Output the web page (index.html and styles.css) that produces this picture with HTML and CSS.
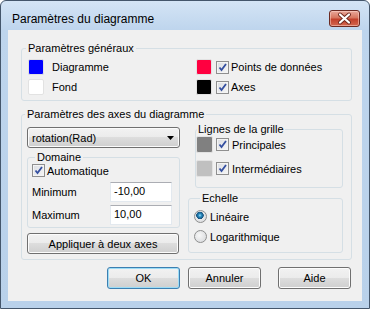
FILE: index.html
```html
<!DOCTYPE html>
<html lang="fr">
<head>
    <meta charset="UTF-8">
    <title>Paramètres du diagramme</title>
    <link rel="stylesheet" href="styles.css">
</head>
<body>
    <div class="window">
        <div class="titlebar">
            <span class="title">Paramètres du diagramme</span>
            <span class="close">
                <svg width="31" height="17" viewBox="0 0 31 17">
                    <path d="M11 4.5l9 8M20 4.5l-9 8" stroke="#6e2a20" stroke-width="4" stroke-linecap="round"/>
                    <path d="M11 4.5l9 8M20 4.5l-9 8" stroke="#fff" stroke-width="2.2" stroke-linecap="round"/>
                </svg>
            </span>
        </div>

        <div class="client">
            <fieldset class="group general">
                <legend>Paramètres généraux</legend>
                <div class="general-grid">
                    <div class="item">
                        <span class="swatch blue"></span>
                        <span class="name">Diagramme</span>
                    </div>
                    <div class="item">
                        <span class="swatch red"></span>
                        <span class="chk"></span>
                        <span class="check-label">Points de données</span>
                    </div>
                    <div class="item">
                        <span class="swatch white"></span>
                        <span class="name">Fond</span>
                    </div>
                    <div class="item">
                        <span class="swatch black"></span>
                        <span class="chk"></span>
                        <span class="check-label">Axes</span>
                    </div>
                </div>
            </fieldset>

            <fieldset class="group axes">
                <legend>Paramètres des axes du diagramme</legend>
                <div class="axes-body">
                    <div class="col-left">
                        <div class="combo">
                            <span>rotation(Rad)</span>
                            <svg width="7" height="4" viewBox="0 0 7 4"><path d="M0 0h7L3.5 4z" fill="#000"/></svg>
                        </div>
                        <fieldset class="group domaine">
                            <legend>Domaine</legend>
                            <div class="auto-row">
                                <span class="chk"></span>
                                <span>Automatique</span>
                            </div>
                            <div class="range">
                                <span>Minimum</span>
                                <span class="field">-10,00</span>
                                <span>Maximum</span>
                                <span class="field">10,00</span>
                            </div>
                        </fieldset>
                        <button class="btn apply">Appliquer à deux axes</button>
                    </div>
                    <div class="col-right">
                        <fieldset class="group grille">
                            <legend>Lignes de la grille</legend>
                            <div class="grid-row">
                                <span class="swatch gray"></span>
                                <span class="chk"></span>
                                <span>Principales</span>
                            </div>
                            <div class="grid-row">
                                <span class="swatch light"></span>
                                <span class="chk"></span>
                                <span>Intermédiaires</span>
                            </div>
                        </fieldset>
                        <fieldset class="group echelle">
                            <legend>Echelle</legend>
                            <div class="radio-row">
                                <span class="radio on"></span>
                                <span>Linéaire</span>
                            </div>
                            <div class="radio-row">
                                <span class="radio"></span>
                                <span>Logarithmique</span>
                            </div>
                        </fieldset>
                    </div>
                </div>
            </fieldset>

            <div class="actions">
                <button class="btn default">OK</button>
                <button class="btn">Annuler</button>
                <button class="btn help">Aide</button>
            </div>
        </div>
    </div>
</body>
</html>
```

FILE: styles.css
```css
body {
    margin: 0;
    background: #fff;
    font-family: "Liberation Sans", Arial, sans-serif;
    font-size: 11px;
    color: #000;
}
.window {
    width: 370px;
    height: 309px;
    box-sizing: border-box;
    border: 1px solid #44566b;
    border-radius: 6px 6px 0 0;
    background: linear-gradient(#d4e4f5, #bed5ed 29px, #b9d1ea);
    padding: 0 7px 7px;
    display: flex;
    flex-direction: column;
}
.titlebar {
    height: 29px;
    box-sizing: border-box;
    display: flex;
    justify-content: space-between;
    align-items: flex-start;
}
.title {
    font-size: 12px;
    line-height: 15px;
    margin: 11px 0 0 4px;
}
.close {
    width: 31px;
    height: 17px;
    margin: 9px 2px 0 0;
    box-sizing: border-box;
    border: 1px solid #6b2a22;
    border-radius: 3px;
    background: linear-gradient(#e9a99b, #d7765f 45%, #c2412c 55%, #d4674f);
    box-shadow: inset 0 0 0 1px rgba(255, 220, 210, 0.5);
    overflow: hidden;
}
.close svg {
    display: block;
    margin: -1px;
}
.client {
    flex: 1;
    background: #f0f0f0;
    display: flex;
    flex-direction: column;
}
.group {
    border: 1px solid #d5dfe5;
    border-radius: 3px;
    margin: 0;
    padding: 0;
    min-width: 0;
}
.group legend {
    padding: 0 2px;
    margin-left: 4px;
    line-height: 13px;
}
.general {
    margin: 12px 10px 0 13px;
    padding: 4px 6px 5px;
}
.general legend {
    margin-left: -2px;
}
.general-grid {
    display: grid;
    grid-template-columns: 168px 1fr;
    row-gap: 4px;
}
.item {
    display: flex;
    align-items: center;
    height: 16px;
}
.swatch {
    width: 16px;
    height: 16px;
    box-sizing: border-box;
    border: 1px solid #e2e2e2;
    border-radius: 2px;
    flex: none;
}
.blue { background: #0000ff; }
.red { background: #ff0040; }
.white { background: #fff; }
.black { background: #000; }
.gray { background: #808080; width: 17px; height: 17px; }
.light { background: #c0c0c0; width: 17px; height: 17px; }
.name {
    margin-left: 8px;
}
.chk {
    width: 13px;
    height: 13px;
    flex: none;
    box-sizing: border-box;
    border: 1px solid #8f8f8f;
    background:
        url("data:image/svg+xml,%3Csvg xmlns='http://www.w3.org/2000/svg' width='11' height='11'%3E%3Cpath d='M2.5 5.5l2 2.5L9 2' fill='none' stroke='%23344fa0' stroke-width='1.8'/%3E%3C/svg%3E") center / 11px 11px no-repeat,
        linear-gradient(135deg, #dcdee3, #f6f6f6);
    box-shadow: inset 0 0 0 1px #f4f4f4;
}
.item .chk {
    margin-left: 4px;
}
.check-label {
    margin-left: 2px;
}
.axes {
    margin: 7px 10px 0 13px;
    padding: 6px 8px 5px 5px;
}
.axes legend {
    margin-left: -2px;
}
.axes-body {
    display: flex;
    gap: 8px;
}
.col-left {
    width: 153px;
    display: flex;
    flex-direction: column;
}
.col-right {
    width: 155px;
    display: flex;
    flex-direction: column;
}
.combo {
    height: 21px;
    box-sizing: border-box;
    border: 1px solid #707070;
    border-radius: 3px;
    background: linear-gradient(#f2f2f2, #ebebeb 50%, #dddddd 50%, #cfcfcf);
    box-shadow: inset 0 0 0 1px #fbfbfb;
    display: flex;
    align-items: center;
    justify-content: space-between;
    padding: 0 5px 0 4px;
}
.domaine {
    margin-top: 3px;
    padding: 0 4px 2px;
}
.domaine legend {
    margin-left: 3px;
}
.auto-row {
    display: flex;
    align-items: center;
    gap: 2px;
    height: 13px;
}
.range {
    display: grid;
    grid-template-columns: 78px 62px;
    grid-auto-rows: 20px;
    row-gap: 3px;
    align-items: center;
    margin-top: 5px;
}
.field {
    height: 20px;
    box-sizing: border-box;
    border: 1px solid #e3e9ef;
    border-top-color: #abadb3;
    background: #fff;
    padding: 0 3px;
    line-height: 17px;
}
.btn {
    font: inherit;
    color: #000;
    height: 21px;
    border: 1px solid #707070;
    border-radius: 3px;
    background: linear-gradient(#f2f2f2, #ebebeb 50%, #dddddd 50%, #cfcfcf);
    box-shadow: inset 0 0 0 1px #fcfcfc;
    padding: 0;
}
.apply {
    margin-top: 5px;
    width: 152px;
}
.grille {
    margin: -4px 0 0 7px;
    padding: 0 0 10px;
}
.grille legend {
    margin-left: 1px;
    padding: 0 1px;
}
.grid-row {
    display: flex;
    align-items: center;
    gap: 3px;
}
.grid-row + .grid-row {
    margin-top: 7px;
}
.echelle {
    margin-top: 4px;
    padding: 5px 5px 9px;
}
.echelle legend {
    margin-left: 6px;
}
.radio-row {
    display: flex;
    align-items: center;
    gap: 3px;
    height: 13px;
}
.radio-row + .radio-row {
    margin-top: 7px;
}
.radio {
    width: 13px;
    height: 13px;
    box-sizing: border-box;
    border-radius: 50%;
    border: 1px solid #8e8f8f;
    background: radial-gradient(circle at 40% 40%, #f7f7f7, #d4d6d9);
}
.radio.on {
    background:
        radial-gradient(circle at 45% 40%, #a8e2f8 0, #2b8fc4 1.5px, #17517c 3.5px, transparent 4px),
        radial-gradient(circle at 40% 40%, #f7f7f7, #d4d6d9);
}
.actions {
    display: flex;
    margin: 7px 11px 0 0;
    justify-content: flex-end;
}
.actions .btn {
    width: 73px;
    height: 22px;
}
.actions .btn + .btn {
    margin-left: 8px;
}
.actions .help {
    margin-left: 17px !important;
}
.default {
    border-color: #3c7fb1;
    box-shadow: inset 0 0 0 1px #9cdcf6;
}
```
